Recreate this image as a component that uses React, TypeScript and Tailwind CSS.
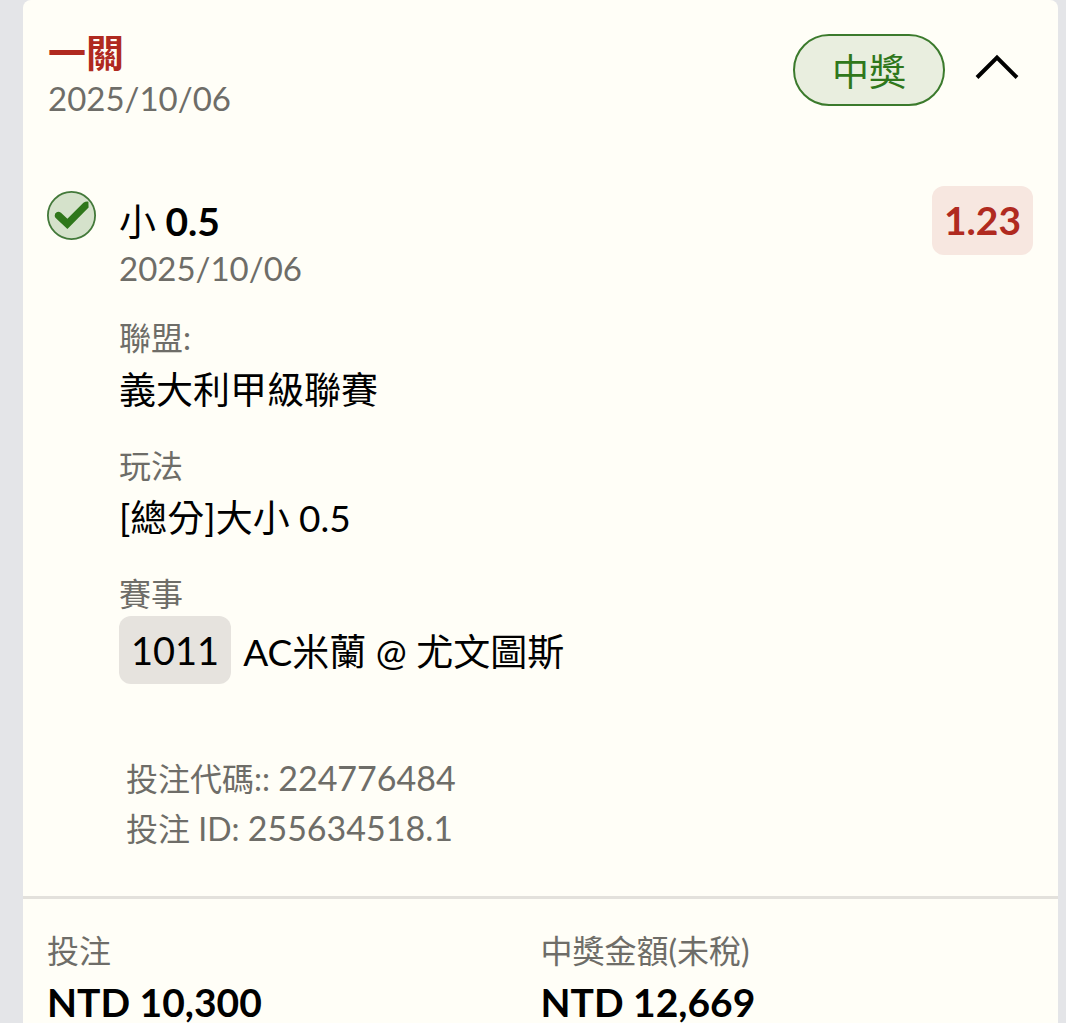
import { useState, type ReactNode } from "react";

const fontStack = "font-['Lato','Noto_Sans_CJK_TC',sans-serif]";

function CheckBadge() {
  return (
    <svg viewBox="0 0 49 49" className="size-[49px] shrink-0" aria-hidden="true">
      <circle cx="24.5" cy="24.5" r="23.6" fill="#d5e2cb" stroke="#43793a" strokeWidth="1.8" />
      <path
        d="M8.2 22.6Q10.6 19.6 14 21.8L20.4 27.7L36.4 11.7Q39.4 10 41.4 10.8L41.6 16.6L20.4 38L8.4 26.8Q7.2 24.6 8.2 22.6Z"
        fill="#2f771b"
      />
    </svg>
  );
}

function Field({ label, children }: { label: string; children: ReactNode }) {
  return (
    <div>
      <dt className="text-[32px] leading-[44px] text-[#6e6d68]">{label}</dt>
      <dd className="text-[37px] leading-[60px]">{children}</dd>
    </div>
  );
}

function Amount({ label, value }: { label: string; value: string }) {
  return (
    <div className="flex-1">
      <dt className="text-[32px] leading-[46px] text-[#6e6d68]">{label}</dt>
      <dd className="text-[39px] leading-[56px] font-bold">{value}</dd>
    </div>
  );
}

export default function App() {
  const [open, setOpen] = useState(true);

  return (
    <main lang="zh-Hant" className={`min-h-screen bg-[#e4e5e8] pr-2 pl-[23px] text-black ${fontStack}`}>
      <article className="min-h-screen rounded-t-lg bg-[#fffef7] pb-6">
        <header className="flex items-start justify-between px-[25px] pt-[29px]">
          <div>
            <h1 className="text-[38px] leading-[46px] font-bold text-[#b02a20]">一關</h1>
            <p className="text-[33px] leading-[46px] text-[#6e6d68]">2025/10/06</p>
          </div>
          <div className="flex items-center gap-[30px] pt-[5px] pr-3.5">
            <span className="rounded-full border-2 border-[#3b7a2c] bg-[#e9eedf] px-[37px] pt-1 text-[37px] leading-[64px] text-[#2f771b]">
              中獎
            </span>
            <button
              type="button"
              className="pb-1.5"
              aria-label="詳情"
              aria-expanded={open}
              onClick={() => setOpen(!open)}
            >
              <svg viewBox="0 0 44 26" className={`h-[26px] w-11 ${open ? "" : "rotate-180"}`} fill="none">
                <path d="M2 23.5L22 3.5L42 23.5" stroke="#000" strokeWidth="4" />
              </svg>
            </button>
          </div>
        </header>

        {open && (
          <section className="flex gap-[23px] pt-[65px] pr-[25px] pb-[43px] pl-6">
            <div className="pt-[5px]">
              <CheckBadge />
            </div>
            <div className="flex-1">
              <div className="flex items-start justify-between">
                <div className="pt-3">
                  <h2 className="text-[37px] leading-[47px]">
                    小 <strong className="text-[39px] font-bold">0.5</strong>
                  </h2>
                  <p className="text-[33px] leading-[46px] text-[#6e6d68]">2025/10/06</p>
                </div>
                <span className="rounded-xl bg-[#f7e7e0] px-3 text-[39px] leading-[69px] font-bold text-[#b02a20]">
                  1.23
                </span>
              </div>

              <dl className="mt-[25px] flex flex-col gap-6">
                <Field label="聯盟:">義大利甲級聯賽</Field>
                <Field label="玩法">[總分]大小 0.5</Field>
                <Field label="賽事">
                  <span className="flex items-center gap-3">
                    <span className="rounded-xl bg-[#e6e3de] px-3 text-[38px] leading-[68px]">1011</span>
                    <span className="pt-1">AC米蘭 @ 尤文圖斯</span>
                  </span>
                </Field>
              </dl>

              <div className="mt-[69px] pl-[7px] text-[32px] leading-[49px] text-[#6e6d68]">
                <p>
                  投注代碼:: <span className="text-[34px]">224776484</span>
                </p>
                <p>
                  投注 ID: <span className="text-[34px]">255634518.1</span>
                </p>
              </div>
            </div>
          </section>
        )}

        <dl className="flex border-t-[3px] border-[#e3e1dc] px-6 pt-[29px]">
          <Amount label="投注" value="NTD 10,300" />
          <Amount label="中獎金額(未稅)" value="NTD 12,669" />
        </dl>
      </article>
    </main>
  );
}
